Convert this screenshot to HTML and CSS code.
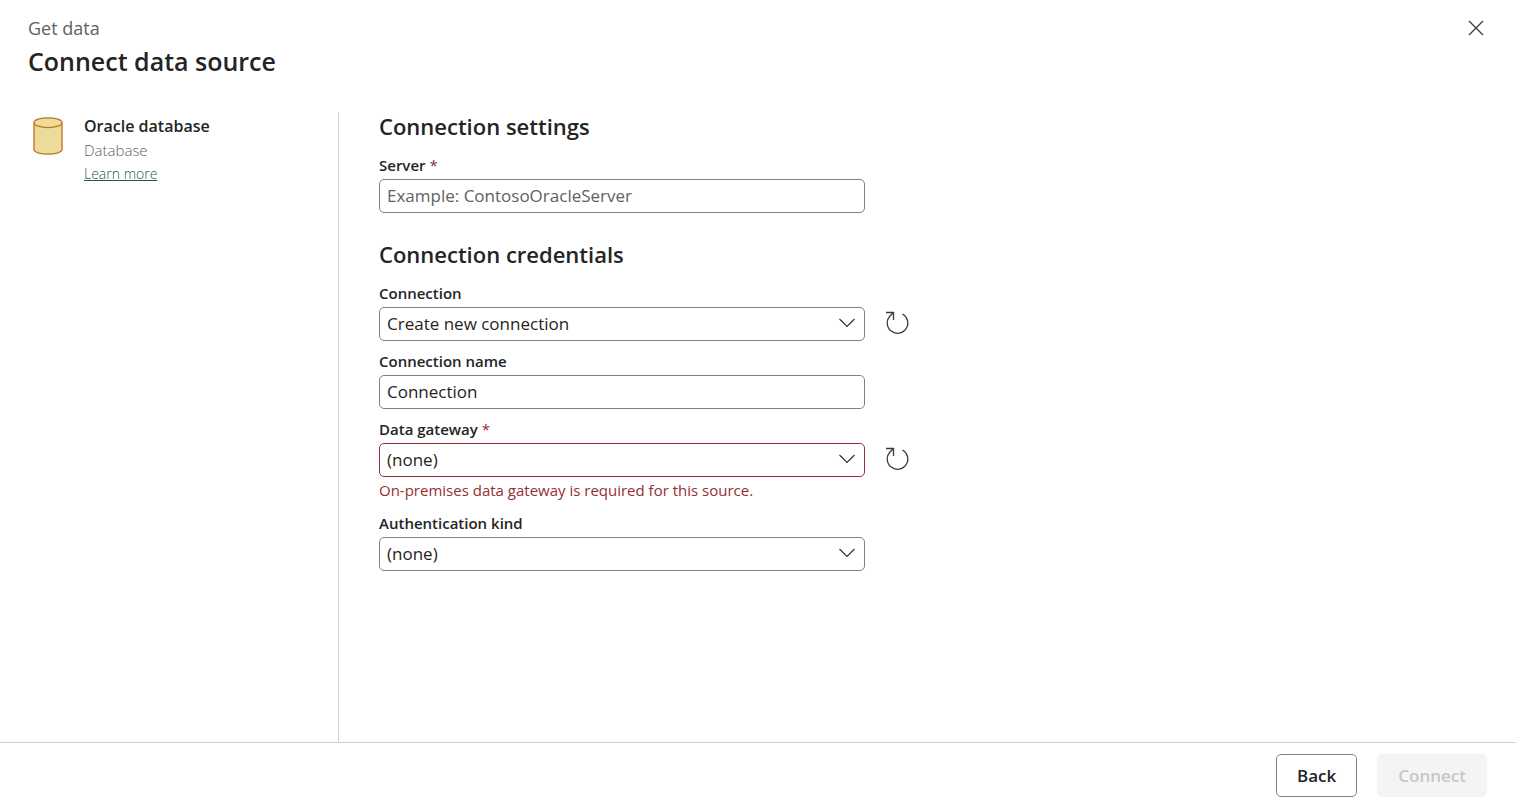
FILE: index.html
```html
<!DOCTYPE html>
<html lang="en">
<head>
  <meta charset="UTF-8" />
  <meta name="viewport" content="width=device-width, initial-scale=1.0"/>
  <title>Connect data source</title>
  <link rel="stylesheet" href="styles.css">
</head>
<body>
  <!-- Header -->
  <header class="header">
    <div class="header-titles">
      <p class="subtitle">Get data</p>
      <h1>Connect data source</h1>
    </div>
    <button type="button" class="icon-button" aria-label="Close">
      <svg width="16" height="16" viewBox="0 0 16 16"><path d="M1 1L15 15M15 1L1 15" fill="none" stroke="#3b3a39" stroke-width="1.3"/></svg>
    </button>
  </header>

  <div class="content">
    <!-- Data source info -->
    <aside class="source">
      <svg class="source-icon" width="30" height="38" viewBox="0 0 30 38">
        <path d="M1 5.700V32.500C1 35 7 37.200 15 37.200S29 35 29 32.500V5.700" fill="#eddb98" stroke="#c4702c" stroke-width="1.300"/>
        <ellipse cx="15" cy="5.700" rx="14" ry="4.900" fill="#eddb98" stroke="#c4702c" stroke-width="1.300"/>
      </svg>
      <div class="source-info">
        <h2>Oracle database</h2>
        <p>Database</p>
        <a href="#">Learn more</a>
      </div>
    </aside>

    <!-- Connection form -->
    <main class="settings">
      <form id="connection-form">
        <h2>Connection settings</h2>
        <div class="field">
          <label for="server">Server <span class="required">*</span></label>
          <input type="text" id="server" placeholder="Example: ContosoOracleServer" />
        </div>

        <h2 class="credentials-title">Connection credentials</h2>
        <div class="field">
          <label for="connection">Connection</label>
          <div class="field-row">
            <div class="select">
              <select id="connection">
                <option>Create new connection</option>
              </select>
              <svg class="chevron" width="18" height="10" viewBox="0 0 18 10"><path d="M1.500 1L9 8.500L16.500 1" fill="none" stroke="#323130" stroke-width="1.200"/></svg>
            </div>
            <button type="button" class="icon-button" aria-label="Refresh connections">
              <svg width="24" height="24" viewBox="0 0 24 24"><path d="M1 1.500H8.500V9M8.500 1.500L5 5A10.300 10.300 0 1 0 17.500 3" fill="none" stroke="#3b3a39" stroke-width="1.300"/></svg>
            </button>
          </div>
        </div>
        <div class="field">
          <label for="connection-name">Connection name</label>
          <input type="text" id="connection-name" value="Connection" />
        </div>
        <div class="field">
          <label for="gateway">Data gateway <span class="required">*</span></label>
          <div class="field-row">
            <div class="select">
              <select id="gateway" class="invalid" aria-describedby="gateway-error">
                <option>(none)</option>
              </select>
              <svg class="chevron" width="18" height="10" viewBox="0 0 18 10"><path d="M1.500 1L9 8.500L16.500 1" fill="none" stroke="#323130" stroke-width="1.200"/></svg>
            </div>
            <button type="button" class="icon-button" aria-label="Refresh gateways">
              <svg width="24" height="24" viewBox="0 0 24 24"><path d="M1 1.500H8.500V9M8.500 1.500L5 5A10.300 10.300 0 1 0 17.500 3" fill="none" stroke="#3b3a39" stroke-width="1.300"/></svg>
            </button>
          </div>
          <p class="error" id="gateway-error">On-premises data gateway is required for this source.</p>
        </div>
        <div class="field">
          <label for="auth-kind">Authentication kind</label>
          <div class="select">
            <select id="auth-kind">
              <option>(none)</option>
            </select>
            <svg class="chevron" width="18" height="10" viewBox="0 0 18 10"><path d="M1.500 1L9 8.500L16.500 1" fill="none" stroke="#323130" stroke-width="1.200"/></svg>
          </div>
        </div>
      </form>
    </main>
  </div>

  <!-- Footer -->
  <footer class="footer">
    <button type="button" class="back">Back</button>
    <button type="submit" form="connection-form" class="connect" disabled>Connect</button>
  </footer>
</body>
</html>
```
FILE: styles.css
```css
* {
    box-sizing: border-box;
}

body {
    font-family: "Segoe UI", "Open Sans", sans-serif;
    font-size: 17px;
    color: #242424;
    background: white;
    margin: 0;
    min-height: 100vh;
    display: flex;
    flex-direction: column;
}

h1, h2, p {
    margin: 0;
    font-weight: 600;
}

/* Header */
.header {
    display: flex;
    justify-content: space-between;
    align-items: flex-start;
    padding: 15px 28px 33px;
}

.header .subtitle {
    font-size: 18px;
    font-weight: 400;
    line-height: 26px;
    margin-bottom: 2px;
    color: #616161;
}

.header h1 {
    font-size: 25px;
    line-height: 36px;
}

.icon-button {
    display: flex;
    padding: 0;
    border: none;
    background: none;
    cursor: pointer;
}

.header .icon-button {
    padding: 5px 4px;
}

/* Content */
.content {
    flex: 1;
    display: flex;
}

.source {
    flex: 0 0 339px;
    display: flex;
    align-items: flex-start;
    gap: 21px;
    padding: 2px 20px 0 33px;
    border-right: 1px solid #d1d1d1;
}

.source-icon {
    margin-top: 3px;
}

.source-info {
    font-size: 14px;
    line-height: 22px;
}

.source-info h2 {
    font-size: 16px;
    line-height: 24px;
}

.source-info p {
    font-size: 15px;
    font-weight: 300;
    line-height: 25px;
    color: #616161;
}

.source-info a {
    display: block;
    font-weight: 300;
    color: #1f5a50;
}

.settings {
    flex: 1;
    padding: 0 40px 20px;
}

.settings h2 {
    font-size: 22px;
    line-height: 28px;
    margin-bottom: 14px;
}

.settings .credentials-title {
    margin-top: 27px;
}

/* Fields */
.field {
    max-width: 530px;
    margin-bottom: 9px;
}

.field label {
    display: block;
    font-size: 15px;
    font-weight: 600;
    line-height: 22px;
    margin-bottom: 3px;
}

.required, .error {
    color: #942e34;
}

.required {
    font-weight: 400;
}

.field-row {
    display: flex;
    align-items: center;
    gap: 20px;
}

.field-row .icon-button {
    padding-bottom: 2px;
}

.field input, .select {
    width: 486px;
    max-width: 100%;
}

.select {
    position: relative;
}

.field input, .field select {
    display: block;
    height: 34px;
    padding: 0 7px 2px;
    border: 1px solid #808080;
    border-radius: 5px;
    background: white;
    font-family: inherit;
    font-size: 17px;
    color: #242424;
}

.field select {
    width: 100%;
    appearance: none;
}

.field input::placeholder {
    color: #616161;
}

.field select.invalid {
    border-color: #942e34;
}

.chevron {
    position: absolute;
    top: 11px;
    right: 9px;
    pointer-events: none;
}

.error {
    font-size: 15px;
    font-weight: 400;
    line-height: 22px;
    margin: 2px 0 11px;
}

/* Footer */
.footer {
    display: flex;
    justify-content: flex-end;
    gap: 20px;
    padding: 11px 29px 2px;
    border-top: 1px solid #d1d1d1;
}

.footer button {
    height: 43px;
    padding: 0 20px;
    border: 1px solid #808080;
    border-radius: 5px;
    background: white;
    font-family: inherit;
    font-size: 17px;
    font-weight: 600;
    color: #242424;
    cursor: pointer;
}

.footer .connect {
    border-color: #f4f4f4;
    background: #f4f4f4;
    color: #c7c7c7;
    cursor: default;
}
```
